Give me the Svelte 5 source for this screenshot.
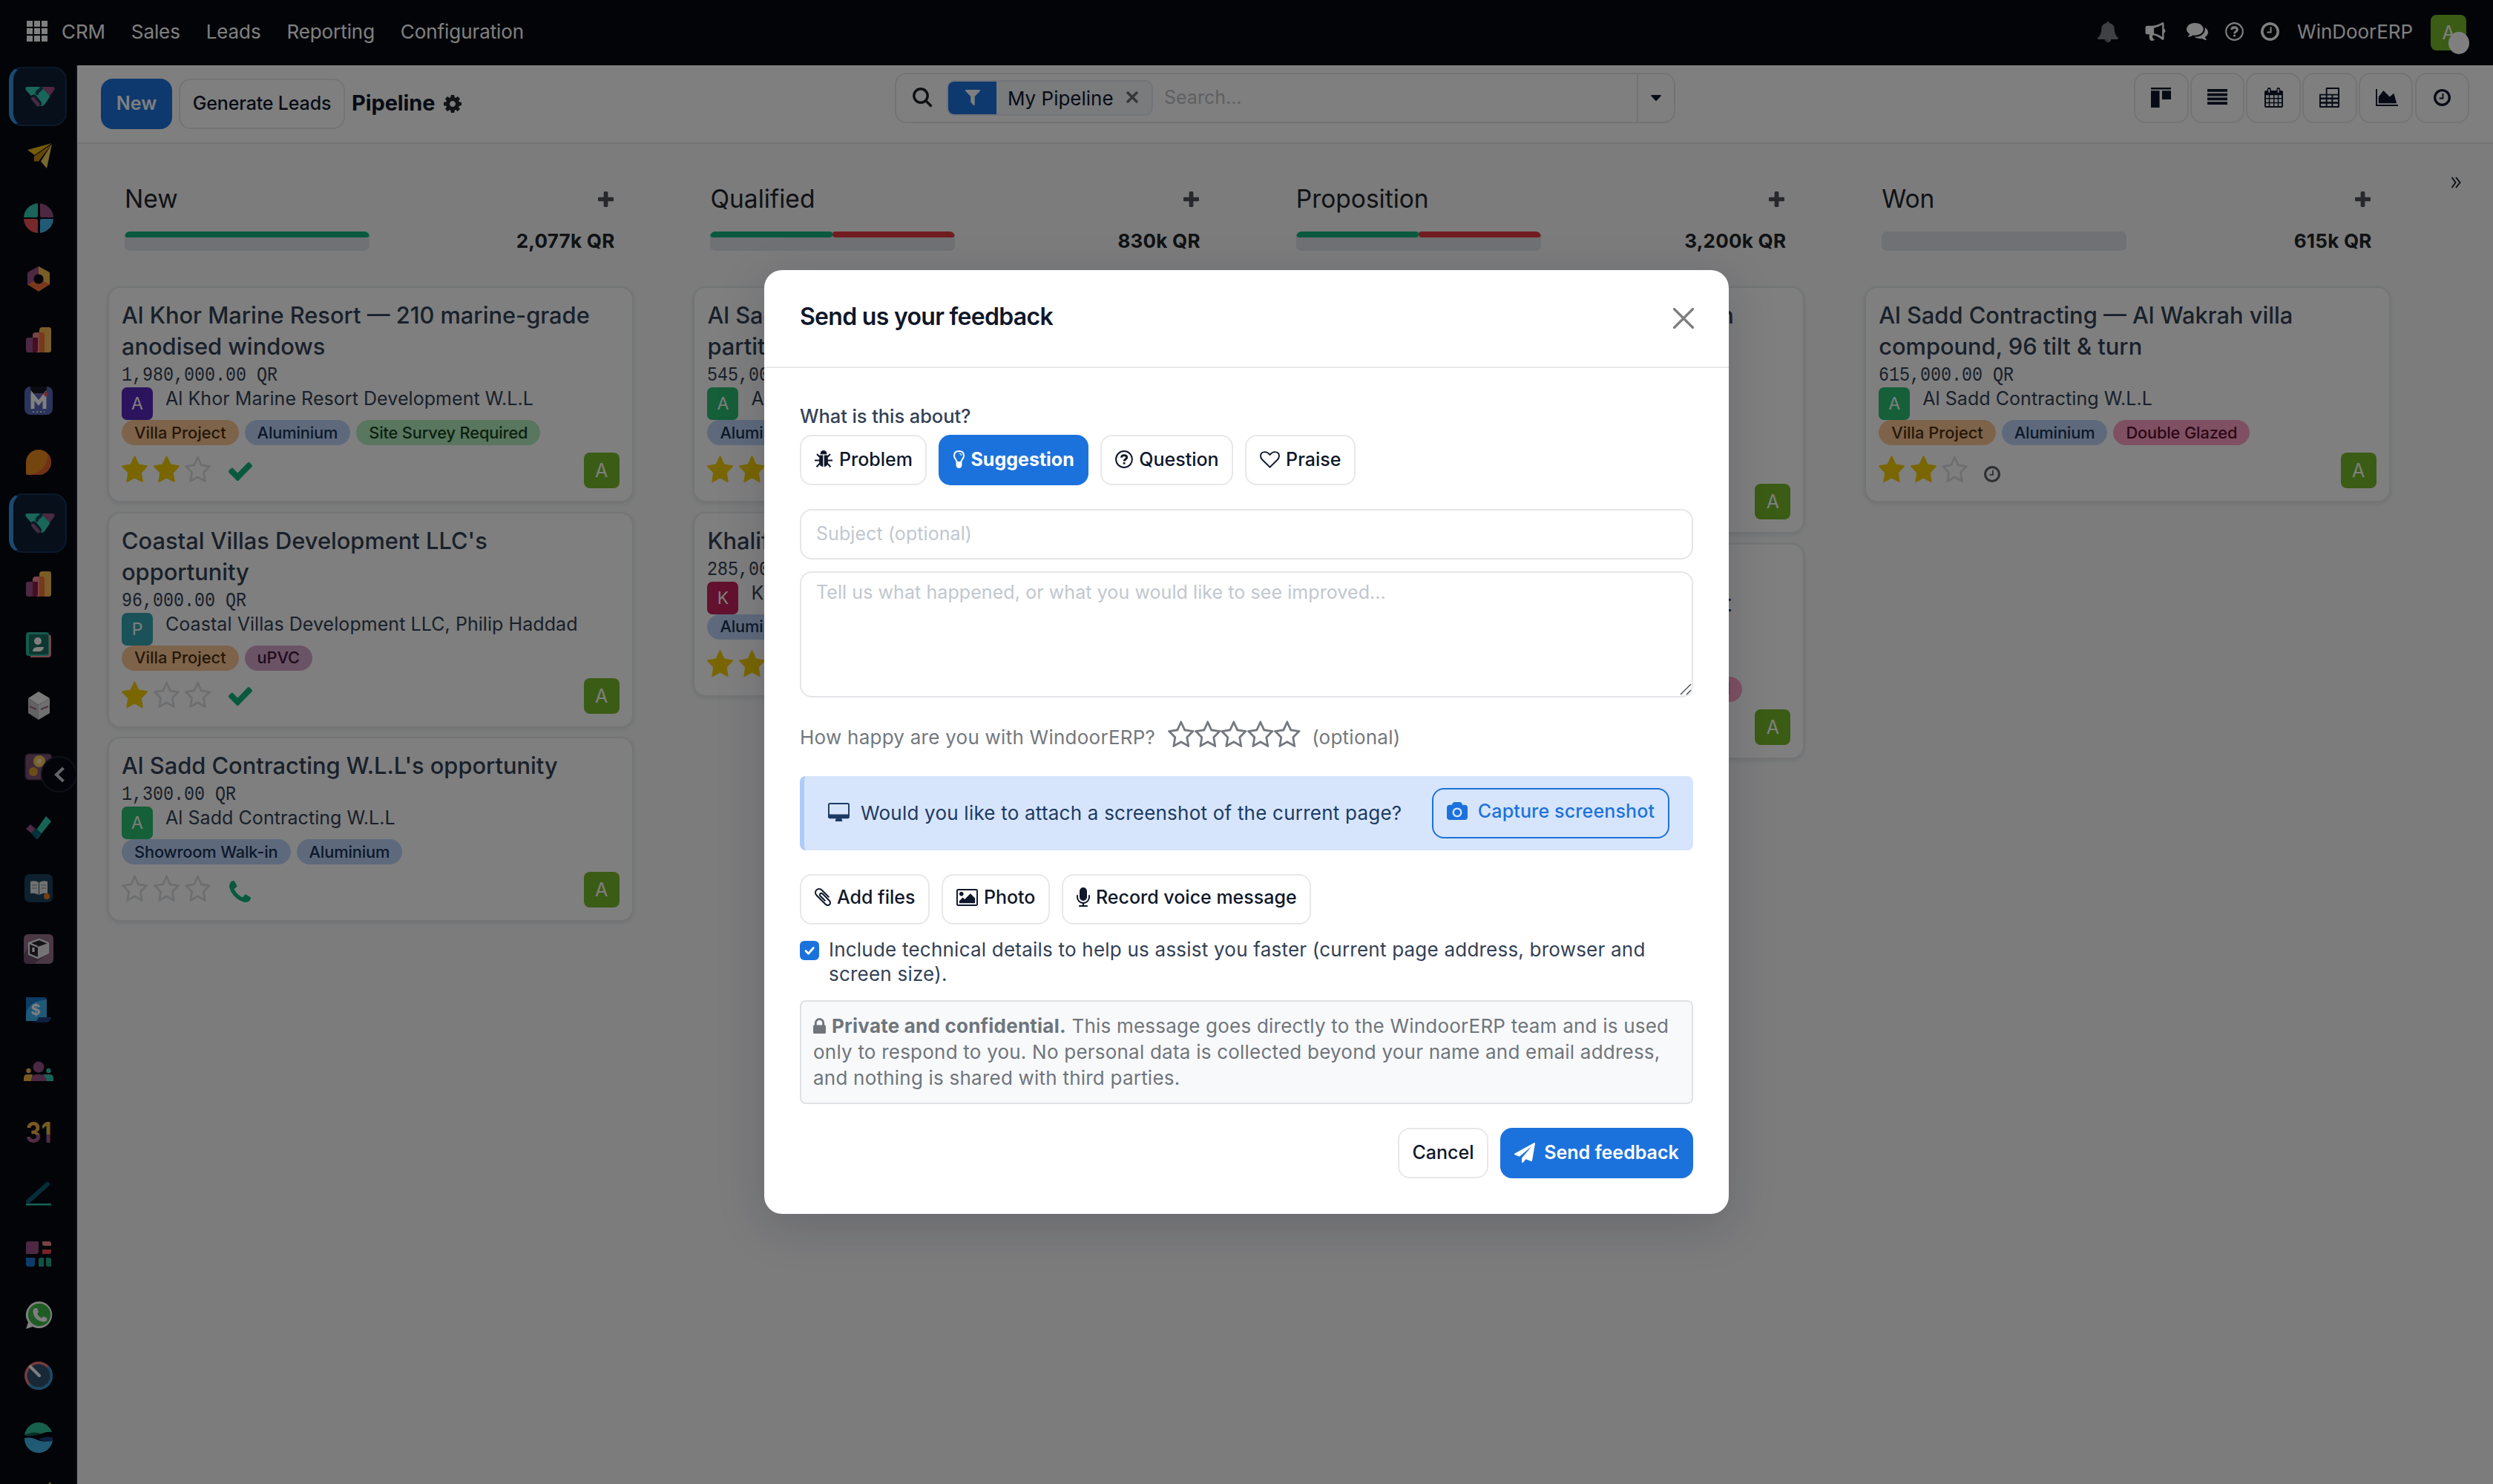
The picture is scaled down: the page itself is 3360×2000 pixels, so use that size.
<script>
  // Single-path glyphs: v = viewBox cropped to the ink, d = outline.
  const glyphs = {
    star: { v: '64 105 1664 1514', d: 'M1728 647q0 22-26 48l-363 354 86 500q1 7 1 20 0 21-10.500 35.500t-30.500 14.500q-19 0-40-12l-449-236-449 236q-22 12-40 12-21 0-31.500-14.500t-10.500-35.500q0-6 2-20l86-500-364-354q-25-27-25-48 0-37 56-46l502-73 225-455q19-41 49-41t49 41l225 455 502 73q56 9 56 46z' },
    staro: { v: '64 105 1664 1514', d: 'M1201 1004l306-297-422-62-189-382-189 382-422 62 306 297-73 421 378-199 377 199zm527-357q0 22-26 48l-363 354 86 500q1 7 1 20 0 50-41 50-19 0-40-12l-449-236-449 236q-22 12-40 12-21 0-31.500-14.500t-10.500-35.500q0-6 2-20l86-500-364-354q-25-27-25-48 0-37 56-46l502-73 225-455q19-41 49-41t49 41l225 455 502 73q56 9 56 46z' },
    check: { v: '121 334 1550 1188', d: 'M1671 566q0 40-28 68l-724 724-136 136q-28 28-68 28t-68-28l-136-136-362-362q-28-28-28-68t28-68l136-136q28-28 68-28t68 28l294 295 656-657q28-28 68-28t68 28l136 136q28 28 28 68z' },
    plus: { v: '192 128 1408 1408', d: 'M1600 736v192q0 40-28 68t-68 28h-416v416q0 40-28 68t-68 28h-192q-40 0-68-28t-28-68v-416h-416q-40 0-68-28t-28-68v-192q0-40 28-68t68-28h416v-416q0-40 28-68t68-28h192q40 0 68 28t28 68v416h416q40 0 68 28t28 68z' },
    camera: { v: '-64 0 1920 1664', d: 'M896 672q119 0 203.500 84.500t84.500 203.500-84.500 203.500-203.500 84.500-203.500-84.500-84.500-203.500 84.500-203.500 203.500-84.500zm704-416q106 0 181 75t75 181v896q0 106-75 181t-181 75h-1408q-106 0-181-75t-75-181v-896q0-106 75-181t181-75h224l51-136q19-49 69.500-84.500t103.500-35.500h512q53 0 103.500 35.500t69.500 84.500l51 136h224zm-704 1152q185 0 316.500-131.500t131.500-316.500-131.500-316.500-316.500-131.500-316.500 131.500-131.500 316.500 131.500 316.500 316.500 131.500z' },
    plane: { v: '0 0 1792 1792', d: 'M1764 11q33 24 27 64l-256 1536q-5 29-32 45-14 8-31 8-11 0-24-5l-453-185-242 295q-18 23-49 23-13 0-22-4-19-7-30.500-23.500t-11.500-36.500v-349l864-1059-1069 925-395-162q-37-14-40-55-2-40 32-59l1664-960q15-9 32-9 20 0 36 11z' },
    clock: { v: '128 128 1536 1536', d: 'M1024 544v448q0 14-9 23t-23 9h-320q-14 0-23-9t-9-23v-64q0-14 9-23t23-9h224v-352q0-14 9-23t23-9h64q14 0 23 9t9 23zm416 352q0-148-73-273t-198-198-273-73-273 73-198 198-73 273 73 273 198 198 273 73 273-73 198-198 73-273zm224 0q0 209-103 385.500t-279.500 279.500-385.500 103-385.500-103-279.500-279.500-103-385.500 103-385.500 279.500-279.500 385.500-103 385.500 103 279.500 279.500 103 385.500z' },
    phone: { v: '192 128 1408 1408', d: 'M1600 1240q0 27-10 70.500t-21 68.500q-21 50-122 106-94 51-186 51-27 0-53-3.500t-57.500-12.500-47-14.500-55.500-20.500-49-18q-98-35-175-83-127-79-264-216t-216-264q-48-77-83-175-3-9-18-49t-20.500-55.500-14.500-47-12.500-57.500-3.500-53q0-92 51-186 56-101 106-122 25-11 68.500-21t70.500-10q14 0 21 3 18 6 53 76 11 19 30 54t35 63.500 31 53.500q3 4 17.500 25t21.500 35.500 7 28.500q0 20-28.500 50t-62 55-62 53-28.500 46q0 9 5 22.500t8.500 20.500 14 24 11.500 19q76 137 174 235t235 174q2 1 19 11.500t24 14 20.500 8.500 22.500 5q18 0 46-28.500t53-62 55-62 50-28.500q14 0 28.500 7t35.500 21.500 25 17.500q25 15 53.500 31t63.500 35 54 30q70 35 76 53 3 7 3 21z' },
    lock: { v: '320 128 1152 1408', d: 'M640 768h512v-192q0-106-75-181t-181-75-181 75-75 181v192zm832 96v576q0 40-28 68t-68 28h-960q-40 0-68-28t-28-68v-576q0-40 28-68t68-28h32v-192q0-184 132-316t316-132 316 132 132 316v192h32q40 0 68 28t28 68z' },
    bell: { v: '64 0 1664 1792', d: 'M912 1696q0-16-16-16-59 0-101.500-42.500t-42.500-101.500q0-16-16-16t-16 16q0 73 51.500 124.500t124.500 51.500q16 0 16-16zm816-288q0 52-38 90t-90 38h-448q0 106-75 181t-181 75-181-75-75-181h-448q-52 0-90-38t-38-90q50-42 91-88t85-119.500 74.500-158.500 50-206 19.500-260q0-152 117-282.500t307-158.500q-8-19-8-39 0-40 28-68t68-28 68 28 28 68q0 20-8 39 190 28 307 158.500t117 282.500q0 139 19.500 260t50 206 74.500 158.500 85 119.500 91 88z' },
    filter: { v: '190 256 1411 1408', d: 'M1595 295q17 41-14 70l-493 493v742q0 42-39 59-13 5-25 5-27 0-45-19l-256-256q-19-19-19-45v-486l-493-493q-31-29-14-70 17-39 59-39h1280q42 0 59 39z' },
    cog: { v: '128 128 1536 1536', d: 'M1152 896q0-106-75-181t-181-75-181 75-75 181 75 181 181 75 181-75 75-181zm512-109v222q0 12-8 23t-20 13l-185 28q-19 54-39 91 35 50 107 138 10 12 10 25t-9 23q-27 37-99 108t-94 71q-12 0-26-9l-138-108q-44 23-91 38-16 136-29 186-7 28-36 28h-222q-14 0-24.500-8.500t-11.500-21.500l-28-184q-49-16-90-37l-141 107q-10 9-25 9-14 0-25-11-126-114-165-168-7-10-7-23 0-12 8-23 15-21 51-66.500t54-70.500q-27-50-41-99l-183-27q-13-2-21-12.500t-8-23.500v-222q0-12 8-23t19-13l186-28q14-46 39-92-40-57-107-138-10-12-10-24 0-10 9-23 26-36 98.500-107.500t94.500-71.500q13 0 26 10l138 107q44-23 91-38 16-136 29-186 7-28 36-28h222q14 0 24.500 8.500t11.500 21.500l28 184q49 16 90 37l142-107q9-9 24-9 13 0 25 10 129 119 165 170 7 8 7 22 0 12-8 23-15 21-51 66.500t-54 70.500q26 50 41 98l183 28q13 2 21 12.500t8 23.500z' },
    area: { v: '0 128 2048 1536', d: 'M2048 1536v128h-2048v-1536h128v1408h1920zm-384-1024l256 896h-1664v-576l448-576 576 576z' },
    comments: { v: '0 256 1792 1408', d: 'M1408 768q0 139-94 257t-256.500 186.500-353.500 68.500q-86 0-176-16-124 88-278 128-36 9-86 16h-3q-11 0-20.500-8t-11.500-21q-1-3-1-6.500t.5-6.500 2-6l2.500-5 3.500-5.500 4-5 4.500-5 4-4.500q5-6 23-25t26-29.500 22.500-29 25-38.500 20.500-44q-124-72-195-177t-71-224q0-139 94-257t256.500-186.500 353.500-68.500 353.500 68.500 256.500 186.500 94 257zm384 256q0 120-71 224.500t-195 176.500q10 24 20.500 44t25 38.500 22.500 29 26 29.500 23 25q1 1 4 4.500t4.500 5 4 5 3.500 5.500l2.500 5 2 6 .5 6.500-1 6.500q-3 14-13 22t-22 7q-50-7-86-16-154-40-278-128-90 16-176 16-271 0-472-132 58 4 88 4 161 0 309-45t264-129q125-92 192-212t67-254q0-77-23-152 129 71 204 178t75 230z' },
    image: { v: '-64 128 1920 1536', d: 'M576 576q0 80-56 136t-136 56-136-56-56-136 56-136 136-56 136 56 56 136zm1024 384v448h-1408v-192l320-320 160 160 512-512zm96-704h-1600q-13 0-22.500 9.500t-9.500 22.500v1216q0 13 9.500 22.500t22.500 9.500h1600q13 0 22.500-9.500t9.500-22.500v-1216q0-13-9.500-22.500t-22.500-9.500zm160 32v1216q0 66-47 113t-113 47h-1600q-66 0-113-47t-47-113v-1216q0-66 47-113t113-47h1600q66 0 113 47t47 113z' },
    clip: { v: '196 133 1400 1527', d: 'M1596 1385q0 117-79 196t-196 79q-135 0-235-100l-777-776q-113-115-113-271 0-159 110-270t269-111q158 0 273 113l605 606q10 10 10 22 0 16-30.500 46.500t-46.500 30.500q-13 0-23-10l-606-607q-79-77-181-77-106 0-179 75t-73 181q0 105 76 181l776 777q63 63 145 63 64 0 106-42t42-106q0-82-63-145l-581-581q-26-24-60-24-29 0-48 19t-19 48q0 32 25 59l410 410q10 10 10 22 0 16-31 47t-47 31q-12 0-22-10l-410-410q-63-61-63-149 0-82 57-139t139-57q88 0 149 63l581 581q100 98 100 235z' },
    desktop: { v: '-64 0 1920 1664', d: 'M1728 992v-832q0-13-9.500-22.500t-22.500-9.500h-1600q-13 0-22.500 9.500t-9.500 22.500v832q0 13 9.500 22.500t22.500 9.500h1600q13 0 22.500-9.500t9.500-22.500zm128-832v1088q0 66-47 113t-113 47h-544q0 37 16 77.500t32 71 16 43.500q0 26-19 45t-45 19h-512q-26 0-45-19t-19-45q0-14 16-44t32-70 16-78h-544q-66 0-113-47t-47-113v-1088q0-66 47-113t113-47h1600q66 0 113 47t47 113z' },
    mic: { v: '320 0 1152 1664', d: 'M1472 704v128q0 221-147.500 384.500t-364.500 187.500v132h256q26 0 45 19t19 45-19 45-45 19h-640q-26 0-45-19t-19-45 19-45 45-19h256v-132q-217-24-364.500-187.500t-147.500-384.500v-128q0-26 19-45t45-19 45 19 19 45v128q0 185 131.500 316.500t316.500 131.500 316.500-131.500 131.500-316.500v-128q0-26 19-45t45-19 45 19 19 45zm-256-384v512q0 132-94 226t-226 94-226-94-94-226v-512q0-132 94-226t226-94 226 94 94 226z' },
    list: { v: '0 0 28 22', d: 'M0 0h28v4H0zM0 6h28v4H0zM0 12h28v4H0zM0 18h28v4H0z' },
    kanban: { v: '0 0 28 28', d: 'M0 0h28v2.500H0zM0 4.500h12V28H0zM15.500 4.500H28V16.500H15.500z' },
    caret: { v: '0 0 16 9', d: 'M1 0h14q1.200.6.4 1.600L8.800 8.600q-.8.700-1.600 0L.6 1.600Q-.2.600 1 0z' },
  };

  const nav = ['CRM', 'Sales', 'Leads', 'Reporting', 'Configuration'];
  const apps = ['crm', 'plane', 'pie', 'hex', 'bars', 'mail', 'leaf', 'crm', 'bars', 'contact', 'cube', 'money', 'tick', 'book', 'box', 'invoice', 'people', 'cal', 'pen', 'tiles', 'wa', 'gauge', 'globe', 'spark'];

  const villa = { t: 'Villa Project', c: 'orange' };
  const alu = { t: 'Aluminium', c: 'blue' };
  const glazed = { t: 'Double Glazed', c: 'pink' };
  const survey = { t: 'Site Survey Required', c: 'green' };
  const columns = [
    { name: 'New', total: '2,077k QR', segs: [['ok', 100]], cards: [
      { title: ['Al Khor Marine Resort — 210 marine-grade', 'anodised windows'], amt: '1,980,000.00 QR', who: 'Al Khor Marine Resort Development W.L.L', ini: 'A', tone: 'violet', tags: [villa, alu, survey], stars: 2, act: 'check' },
      { title: ["Coastal Villas Development LLC's", 'opportunity'], amt: '96,000.00 QR', who: 'Coastal Villas Development LLC, Philip Haddad', ini: 'P', tone: 'teal', tags: [villa, { t: 'uPVC', c: 'plum' }], stars: 1, act: 'check' },
      { title: ["Al Sadd Contracting W.L.L's opportunity"], amt: '1,300.00 QR', who: 'Al Sadd Contracting W.L.L', ini: 'A', tone: 'emerald', tags: [{ t: 'Showroom Walk-in', c: 'blue' }, alu], stars: 0, act: 'phone' },
    ] },
    { name: 'Qualified', total: '830k QR', segs: [['ok', 50], ['bad', 50]], cards: [
      { title: ['Al Sadd Contracting — office', 'partitions'], amt: '545,000.00 QR', who: 'Al Sadd Contracting W.L.L', ini: 'A', tone: 'emerald', tags: [alu], stars: 2, act: 'check' },
      { title: ['Khalifa Villas — sliding doors'], amt: '285,000.00 QR', who: 'Khalifa Villas', ini: 'K', tone: 'rose', tags: [alu], stars: 2, act: 'check' },
    ] },
    { name: 'Proposition', total: '3,200k QR', segs: [['ok', 50], ['bad', 50]], cards: [
      { title: ['Coastal Villas Development — curtain', 'wall and', 'windows'], spread: [594, 0, 0], amt: '2,400,000.00 QR', who: 'Coastal Villas', ini: 'C', tone: 'teal', tags: [alu], stars: 2, act: 'check' },
      { title: ['Al Khor Marine Resort — windows', 'and sliding doors, second phase unit'], spread: [0, 591], amt: '800,000.00 QR', who: 'Al Khor Marine', ini: 'A', tone: 'violet', tags: [villa, survey, glazed], stars: 2, act: 'check' },
    ] },
    { name: 'Won', total: '615k QR', segs: [], cards: [
      { title: ['Al Sadd Contracting — Al Wakrah villa', 'compound, 96 tilt & turn'], amt: '615,000.00 QR', who: 'Al Sadd Contracting W.L.L', ini: 'A', tone: 'emerald', tags: [villa, alu, glazed], stars: 2, act: 'clock' },
    ] },
  ];
</script>

{#snippet g(name, cls)}
  <svg class="g {cls}" viewBox={glyphs[name].v} preserveAspectRatio="none"><path d={glyphs[name].d} /></svg>
{/snippet}

{#snippet question(cls)}
  <svg class="g {cls}" viewBox="0 0 24 24"><circle cx="12" cy="12" r="10.900" class="ln2" /><path class="ln3" d="M8.300 9.600C8.600 7.600 10 6.600 12 6.600c2.100 0 3.700 1.200 3.700 3 0 2.400-3.600 2.500-3.600 5" /><path d="M10.700 16h2.800v2.600h-2.800z" /></svg>
{/snippet}

{#snippet app(name)}
  <svg class="appicon" viewBox="0 0 40 40">
    {#if name === 'crm'}
      <path fill="#985184" d="M20 7h17.500q3.500 1 1.500 4.500l-5.500 7.500L21 8z" />
      <path fill="#36cdb5" d="M2.500 7H21l10 10q3 1.500 1.500 4.500L26 31q-3 3-6 1.500L1 11.500Q-1 7.500 2.500 7z" />
      <path fill="none" stroke="#0b3a4c" stroke-width="9" stroke-linecap="round" d="M11.500 22l6 7.500" />
      <path fill="none" stroke="#985184" stroke-width="4.600" stroke-linecap="round" d="M10.500 23l7 8" />
      <path fill="none" stroke="#0b4a5c" stroke-width="4.600" stroke-linecap="round" d="M21.500 9q-1.500 2.500-3.500 3.500-2.200 1.200-2 3.500" />
      <path fill="none" stroke="#36cdb5" stroke-width="4" stroke-linecap="round" d="M20 17.500q3-1.500 5-1" />
    {:else if name === 'plane'}
      <path fill="#eab912" d="M5 10L37.500 1 14.500 17z" /><path fill="#c98a12" d="M14 18.500L38 2 20 25.500h-6z" /><path fill="#f0d060" d="M38 2l-7 33-8-9.500z" />
    {:else if name === 'pie'}
      <path fill="#34c9b2" d="M19 0v17q0 2-2 2H0A20 20 0 0119 0z" /><path fill="#985184" d="M22 0v17q0 2 2 2h16A20 20 0 0022 0z" /><path fill="#ee5056" d="M19 40V23q0-2-2-2H0a20 20 0 0019 19z" /><path fill="#44b6ea" d="M22 40V23q0-2 2-2h16a20 20 0 01-18 19z" />
    {:else if name === 'hex'}
      <path fill="#985184" d="M20 3L6 10.500q-1 .8-1 2V28l15-8z" /><path fill="#f2b84e" d="M20 3l14 7.500q1 .8 1 2V28l-15-8z" /><path fill="#ee7038" d="M5 27.500l15 9.500 15-9.500-15-8z" /><circle cx="20" cy="20" r="6.600" fill="#070912" />
    {:else if name === 'bars'}
      <path fill="#f0888c" d="M12 14q0-4 4-4h6v27H12z" /><path fill="#f2b84e" d="M21 7q0-4 4-4h9q3 0 3 3v28q0 3-3 3H21z" /><path fill="#ee7038" d="M21 10h4q3 0 3 3v24h-7z" /><path fill="#985184" d="M3 20q0-3 3-3h7v20H6q-3 0-3-3z" /><path fill="#8a1f42" d="M12 17h7v17q0 3-3 3h-4z" />
    {:else if name === 'mail'}
      <rect x="1" y="1" width="38" height="38" rx="8" fill="#5468b8" /><path fill="#141824" d="M9 1h22v9H9z" /><path d="M12 31V13l8 10 8-10v18" fill="none" stroke="#fff" stroke-width="5" /><path fill="#e85060" d="M16 11h12V7l6 4-6 4v-3z" /><path d="M12 35h16" stroke="#ddd" stroke-width="2" stroke-dasharray="2 3" />
    {:else if name === 'leaf'}
      <path fill="#ea8a1e" d="M3 20A17 17 0 1120 37H5q-2 0-2-2z" /><path fill="#e0602c" d="M33 9A17 17 0 0120 37H8Q30 34 33 9z" />
    {:else if name === 'contact'}
      <path fill="#f0888c" d="M9 6h24q4 0 4 4v23q0 4-4 4H9z" /><rect x="3" y="3" width="31" height="32" rx="4" fill="#2cb79c" /><rect x="7" y="6" width="26" height="27" rx="2" fill="#1d6e62" /><circle cx="19" cy="15" r="5" fill="#fff" /><path fill="#fff" d="M12 29q0-6 7-6h8q-1 6-7 6z" />
    {:else if name === 'cube'}
      <path fill="#f4f4f4" d="M20 1l15 9-15 9L6 10z" /><path fill="#c4c4c4" d="M6 10l14 9v20L6 30z" /><path fill="#dedede" d="M35 10l-15 9v20l15-9z" /><path d="M8 21l9 4M23 25l10-4" stroke="#a06080" stroke-width="2" />
    {:else if name === 'money'}
      <rect x="2" y="3" width="36" height="35" rx="5" fill="#7d5377" stroke="#3a3040" stroke-width="1.500" /><circle cx="21" cy="13" r="8" fill="#eec25e" /><circle cx="13" cy="27" r="6" fill="#d99a32" /><circle cx="21" cy="13" r="3" fill="#fbe7a8" />
    {:else if name === 'tick'}
      <path fill="#985184" d="M3 22l6-6 9 8-4 7z" /><path fill="#2fc9ae" d="M13 29L30 5l7 7-19 24z" /><path fill="#0b5f78" d="M10 28l6-7 8 7-7 8z" />
    {:else if name === 'book'}
      <rect x="1" y="1" width="38" height="38" rx="7" fill="#1a435c" /><path fill="#e4e4e4" d="M9 11q6-2 11 1v17q-5-3-11-2zM32 11q-6-2-11 1v17q5-3 11-2z" /><path d="M11 16h7M11 20h7M23 16h7M23 20h7" stroke="#8a8a8a" /><circle cx="31" cy="31" r="4" fill="#ee7d22" />
    {:else if name === 'box'}
      <rect width="40" height="40" rx="6" fill="#94708a" /><path fill="#6d5068" d="M8 14L0 28v6q0 6 6 6h8l18-14z" /><path fill="#2c2430" stroke="#f0f0f0" stroke-width="2.200" d="M7 12l14-5 12 5v13l-14 7-12-5z" /><path fill="#e8e8e8" d="M19 17l14-5v13l-14 7z" /><path d="M7 12l12 5" stroke="#f0f0f0" stroke-width="2.200" /><path d="M13 18v6" stroke="#fff" stroke-width="3" />
    {:else if name === 'invoice'}
      <path fill="#1b78c8" d="M3 3h24q4 0 4 4v26H3z" /><path fill="#3fb2f0" d="M31 6Q8 8 3 24v11h26q2 0 2-2z" /><path fill="#1d3f80" d="M20 30h17q-1 7-7 7H10q8 0 10-7z" /><text x="16" y="27" text-anchor="middle" font-size="20" font-weight="700" fill="#fff">$</text>
    {:else if name === 'people'}
      <circle cx="20" cy="14" r="7.500" fill="#985184" /><circle cx="6.500" cy="19" r="3.200" fill="#f2b540" /><circle cx="33.500" cy="19" r="3.200" fill="#2fc9ae" /><path fill="#f2b540" d="M0 33v-4q0-5 5-5h7l-2 9z" /><path fill="#2fc9ae" d="M40 33v-4q0-5-5-5h-9l4 9z" /><path fill="#985184" d="M10 33q0-9 7-9h5q8 0 9 9z" />
    {:else if name === 'cal'}
      <text x="20" y="34" text-anchor="middle" font-size="38" font-weight="700" textLength="35" lengthAdjust="spacingAndGlyphs" fill="url(#calfill)">31</text>
    {:else if name === 'pen'}
      <path d="M6 31L32 8" stroke="#0f5a70" stroke-width="6" stroke-linecap="round" /><path fill="#2fc9ae" d="M3 34h34v2.500H3z" />
    {:else if name === 'tiles'}
      <path fill="#985184" d="M3 6q0-3 3-3h14v14q0 3-3 3H3z" /><path fill="#f0888c" d="M25 3h9q3 0 3 3v3h-9q-3 0-3-3z" /><path fill="#f0484f" d="M25 14h12v3q0 3-3 3h-9z" /><path fill="#1b78d8" d="M3 25h12v9q0 3-3 3H6q-3 0-3-3z" /><path fill="#1fa886" d="M20 28q0-3 3-3h4v12h-7zM30 25h4q3 0 3 3v9h-4q-3 0-3-3z" />
    {:else if name === 'wa'}
      <path fill="#fff" d="M21 2a18 18 0 11-9 34L3 39l3-9A18 18 0 0121 2z" /><circle cx="21" cy="20" r="15.200" fill="#3fb848" /><path fill="#fff" d="M15 11l3 0 2 5-2 2.500q2 4 6 6l2.500-2.500 5 2.500q0 5-5 5Q14 28 12.500 16q0-4 2.500-5z" />
    {:else if name === 'gauge'}
      <circle cx="20" cy="20" r="19" fill="#f0787c" /><path fill="#3494cc" d="M33.500 6.500a19 19 0 11-27 27z" /><circle cx="20" cy="20" r="15.500" fill="#32506c" /><path d="M9 8l12 12" stroke="#fff" stroke-width="4" stroke-linecap="round" />
    {:else if name === 'globe'}
      <path fill="#2fc098" d="M2 14a19 19 0 0136 0q-6-1-14 2-12 4-23 2z" /><path fill="#0f5a50" d="M1 18q12-6 22-2-10 4-22 2z" /><path fill="#40b4e8" d="M1 22q10-2 18 3 10 4 20-1A19 19 0 011 22z" /><path fill="#1d3f80" d="M20 24q8-5 19-3 0 3-1 5-9 2-18-2z" />
    {:else}
      <path fill="#e8c020" d="M34 0l3 0-4 8z" />
    {/if}
  </svg>
{/snippet}

<div class="screen">
  <svg class="defs"><defs><linearGradient id="calfill" x1="0" y1="0" x2="0" y2="1"><stop offset=".56" stop-color="#f2b540" /><stop offset=".56" stop-color="#a5568c" /></linearGradient></defs></svg>

  <header class="topbar">
    <svg class="launcher" viewBox="0 0 28 28"><path d="M0 0h8v8H0zM10 0h8v8h-8zM20 0h8v8h-8zM0 10h8v8H0zM10 10h8v8h-8zM20 10h8v8h-8zM0 20h8v8H0zM10 20h8v8h-8zM20 20h8v8h-8z" /></svg>
    <nav>{#each nav as n}<span>{n}</span>{/each}</nav>
    <div class="tray">
      {@render g('bell', 'bell')}
      <svg class="g horn" viewBox="0 0 28 26"><path fill-rule="evenodd" d="M26 9q2 .5 2 3t-2 3v8q0 2-2 2-7-6-13-7-2 1-1 3.500 1 2 3 3-1 1.500-3.500 1.500-2 0-3-1-2-4-1-8H3q-3 0-3-3V8q0-3 3-3h7q7-.5 14-5 2 0 2 2zm-2.500-5.500Q18 7 12 8v7.500q6 1 11.500 5z" /></svg>
      {@render g('comments', 'chat')}
      {@render question('q')}
      {@render g('clock', 'tclock')}
      <span class="db">WinDoorERP</span>
      <div class="avatar me">A<i></i></div>
    </div>
  </header>

  <div class="main">
    <aside class="side">
      {#each apps as a}<div class="app" class:on={a === 'crm'}>{@render app(a)}</div>{/each}
      <div class="collapse"><svg viewBox="0 0 16 24"><path d="M13.500 3L4 12l9.500 9" /></svg></div>
    </aside>

    <div class="content">
      <div class="panel">
        <div class="left">
          <button class="btn primary new">New</button>
          <button class="btn gen">Generate Leads</button>
          <strong>Pipeline</strong>
          {@render g('cog', 'cog')}
        </div>
        <div class="search">
          <svg class="mag" viewBox="0 0 27 27"><circle cx="11" cy="11" r="9.200" /><path d="M17.500 17.500l8 8" /></svg>
          <div class="facet"><span class="fi">{@render g('filter', 'filter')}</span><span class="ft">My Pipeline</span><svg class="x" viewBox="0 0 18 18"><path d="M2 2l14 14M16 2L2 16" /></svg></div>
          <span class="ph">Search...</span>
          <span class="drop">{@render g('caret', 'caret')}</span>
        </div>
        <div class="views">
          <span>{@render g('kanban', 'v28')}</span>
          <span>{@render g('list', 'vlist')}</span>
          <span><svg class="g cal" viewBox="0 0 26 28"><path fill-rule="evenodd" d="M2 4h2V2q0-2 2.500-2T9 2v2h8V2q0-2 2.500-2T22 2v2h2q2 0 2 2v20q0 2-2 2H2q-2 0-2-2V6q0-2 2-2zM5.500 2v5h2V2zM18.500 2v5h2V2zM2 10.500v4h4v-4zm5.500 0v4h5v-4zm6.500 0v4h4.500v-4zm6 0v4h4v-4zM2 16v4.500h4V16zm5.500 0v4.500h5V16zm6.500 0v4.500h4.500V16zm6 0v4.500h4V16zM2 22v4h4v-4zm5.500 0v4h5v-4zm6.500 0v4h4.500v-4zm6 0v4h4v-4z" /></svg></span>
          <span><svg class="g v28" viewBox="0 0 28 28"><path fill-rule="evenodd" d="M10 0h17q1 0 1 1v26q0 1-1 1H1q-1 0-1-1V10q0-1 1-1h8V1q0-1 1-1zm1 2v7h15V2zM2 11v3h7v-3zm9 0v3h6v-3zm8 0v3h7v-3zM2 16.500v3.500h7v-3.500zm9 0v3.500h6v-3.500zm8 0v3.500h7v-3.500zM2 22.500V26h7v-3.500zm9 0V26h6v-3.500zm8 0V26h7v-3.500z" /></svg></span>
          <span>{@render g('area', 'varea')}</span>
          <span>{@render g('clock', 'vclock')}</span>
        </div>
      </div>

      <div class="board">
        {#each columns as col}
          <section class="col">
            <div class="chead"><h2>{col.name}</h2>{@render g('plus', 'plus')}</div>
            <div class="cprog">
              <div class="bar">{#each col.segs as [k, w]}<i class={k} style="width:{w}%"></i>{/each}</div>
              <b>{col.total}</b>
            </div>
            <div class="cards">
              {#each col.cards as c}
                <article class="card">
                  <h3>{#each c.title as line, i}<span class="line" style={c.spread?.[i] ? `width:${c.spread[i]}px` : null}>{line}</span>{/each}</h3>
                  <div class="amt"><span>{c.amt}</span></div>
                  <div class="who"><span class="ini {c.tone}">{c.ini}</span><span class="name">{c.who}</span></div>
                  <div class="tags">{#each c.tags as t}<span class="tag {t.c}">{t.t}</span>{/each}</div>
                  <div class="foot">
                    <div class="stars">{#each [0, 1, 2] as i}{@render g(i < c.stars ? 'star' : 'staro', i < c.stars ? 'st full' : 'st')}{/each}</div>
                    {@render g(c.act, 'act ' + c.act)}
                    <div class="avatar">A</div>
                  </div>
                </article>
              {/each}
            </div>
          </section>
        {/each}
        <svg class="fold" viewBox="0 0 14 16"><path d="M1.500 1l5 7-5 7M7 1l5.500 7L7 15" /></svg>
      </div>
    </div>
  </div>

  <div class="overlay">
    <div class="modal">
      <div class="mhead">
        <h1>Send us your feedback</h1>
        <svg class="close" viewBox="0 0 28 28"><path d="M1.500 1.500l25 25M26.500 1.500l-25 25" /></svg>
      </div>
      <div class="mbody">
        <label class="about" for="subject">What is this about?</label>
        <div class="row">
          <button class="btn kind">
            <svg class="g bug" viewBox="0 0 24 24"><path d="M7.500 5.200Q7.800 0 12 0t4.500 5.200z" /><path d="M6.500 6.500h4.800V22Q6 21.500 6 15zM12.700 6.500h4.800L18 15q0 6.500-5.300 7z" /><path class="ln2" d="M7 9L3 5M17 9l4-4M6.500 13.500H0M17.500 13.500H24M7 17.500l-4.500 4.700M17 17.500l4.500 4.700" /></svg>
            <span>Problem</span></button>
          <button class="btn primary kind">
            <svg class="g bulb" viewBox="0 0 15 24"><path class="ln2" d="M4.600 16Q4.600 14 3 12 1 9.800 1 7.300 1 1 7.500 1T14 7.300q0 2.500-2 4.700-1.600 2-1.600 4z" /><path d="M3.600 16.500h7.800v4Q10.500 24 7.500 24t-3.900-3.500z" /><path class="ln1" d="M7.500 4q2.800 0 3.200 2.800" /></svg>
            <span>Suggestion</span></button>
          <button class="btn kind">{@render question('mq')}<span>Question</span></button>
          <button class="btn kind">
            <svg class="g heart" viewBox="0 0 28 24"><path class="ln2" d="M14 22.500L3.500 12.300Q1 9.700 1 6.800 1 1.200 7.300 1.200 10.500 1.200 14 5q3.500-3.800 6.700-3.800Q27 1.200 27 6.800q0 2.900-2.500 5.500z" /></svg>
            <span>Praise</span></button>
        </div>
        <input id="subject" placeholder="Subject (optional)" />
        <div class="area"><textarea placeholder="Tell us what happened, or what you would like to see improved..."></textarea>
          <svg viewBox="0 0 16 16"><path d="M1 15L15 1M9 15l6-6" /></svg></div>
        <div class="happy"><span>How happy are you with WindoorERP?</span><div class="five">{#each [1, 2, 3, 4, 5] as i}{@render g('staro', 'big')}{/each}</div><span>(optional)</span></div>
        <div class="alert">{@render g('desktop', 'desk')}<span class="ask">Would you like to attach a screenshot of the current page?</span>
          <button class="btn outline up">{@render g('camera', 'cam')}<span>Capture screenshot</span></button></div>
        <div class="row attach">
          <button class="btn kind up">{@render g('clip', 'clip')}<span>Add files</span></button>
          <button class="btn kind up">{@render g('image', 'img')}<span>Photo</span></button>
          <button class="btn kind up">{@render g('mic', 'mic')}<span>Record voice message</span></button>
        </div>
        <div class="tech"><span class="cb"><svg viewBox="0 0 26 26"><path d="M8 13.500l3.700 3.700 6.600-7.700" /></svg></span><p>Include technical details to help us assist you faster (current page address, browser and<br />screen size).</p></div>
        <div class="private"><p>{@render g('lock', 'lock')}<b>Private and confidential.</b> This message goes directly to the WindoorERP team and is used<br />only to respond to you. No personal data is collected beyond your name and email address,<br />and nothing is shared with third parties.</p></div>
        <div class="mfoot"><button class="btn cancel">Cancel</button><button class="btn primary send">{@render g('plane', 'pplane')}<span>Send feedback</span></button></div>
      </div>
    </div>
  </div>
</div>

<style>
  :global(body) { margin: 0; background: #fff; }
  * { box-sizing: border-box; }
  .screen { position: relative; width: 3360px; height: 2000px; overflow: hidden; display: flex; flex-direction: column; font-family: Inter, 'Liberation Sans', sans-serif; font-size: 26px; color: #334155; white-space: nowrap; }
  .defs { position: absolute; width: 0; height: 0; }
  h1, h2, h3, p { margin: 0; font-weight: 400; }
  .g { fill: currentColor; flex: none; display: block; overflow: visible; }
  .ln1, .ln2, .ln3 { fill: none; stroke: currentColor; }
  .ln1 { stroke-width: 1.200; }
  .ln2 { stroke-width: 2; }
  .ln3 { stroke-width: 2.900; }

  .topbar { height: 88px; flex: none; background: #050811; color: #fff; display: flex; align-items: center; padding: 0 36px; }
  .launcher { width: 28px; height: 28px; fill: #fff; margin-bottom: 4px; }
  nav { display: flex; gap: 34.800px; margin-left: 19px; letter-spacing: -.08px; padding-bottom: 3px; }
  .tray { margin-left: auto; display: flex; align-items: center; padding-bottom: 3px; }
  .bell { width: 28px; height: 28px; color: #7d8086; margin-right: 36px; }
  .horn { width: 28px; height: 25px; margin-right: 28px; }
  .chat { width: 29px; height: 23px; margin-right: 23px; }
  .q { width: 25px; height: 25px; margin-right: 23px; }
  .tclock { width: 25px; height: 25px; margin-right: 24px; }
  .db { margin-right: 24px; letter-spacing: -.05px; }
  .avatar { position: relative; width: 48px; height: 48px; border-radius: 8px; background: #77b82b; color: #fff; display: flex; align-items: center; justify-content: center; font-size: 25px; }
  .me { margin-top: 3px; }
  .me i { position: absolute; right: -4px; bottom: -5px; width: 28px; height: 30px; border-radius: 50%; background: #fff; }

  .main { flex: 1; min-height: 0; display: flex; }
  .side { position: relative; width: 104px; flex: none; background: #050811; border-right: 2px solid #151b26; padding: 2px 12px 0; display: flex; flex-direction: column; gap: 2.100px; overflow: hidden; }
  .app { width: 78px; height: 80px; flex: none; border: 2px solid transparent; border-radius: 18px; display: flex; align-items: center; justify-content: center; }
  .on { background: #0c1f35; border-color: #153558; border-left: 6px solid #3a92e0; }
  .appicon { width: 40px; height: 40px; margin-left: 2px; overflow: visible; }
  .collapse { position: absolute; left: 55px; top: 931px; width: 49px; height: 49px; border-radius: 50%; background: #060912; border: 2px solid #1b2230; display: flex; align-items: center; justify-content: center; }
  .collapse svg { width: 16px; height: 24px; fill: none; stroke: #c8cbd0; stroke-width: 4; }

  .content { flex: 1; min-width: 0; display: flex; flex-direction: column; background: #f8f9fa; }
  .panel { height: 106px; flex: none; background: #fff; border-bottom: 2px solid #e5e7eb; display: flex; align-items: flex-start; padding: 0 32px; color: #0f172a; }
  .btn { height: 68px; border: 2px solid #e8e8ea; border-radius: 16px; background: #fff; color: #0f172a; font: 500 25px Inter, 'Liberation Sans', sans-serif; letter-spacing: 0; display: flex; align-items: center; justify-content: center; padding: 0 0 2px; margin: 0; flex: none; white-space: nowrap; }
  .primary { background: #1c72dc; border-color: #1c72dc; color: #fff; font-weight: 700; }
  .up { padding-bottom: 6px; }
  .left { width: 1070px; flex: none; padding-top: 18px; display: flex; align-items: center; }
  .new { width: 96px; margin-right: 9px; font-weight: 600; }
  .gen { width: 224px; letter-spacing: -.15px; }
  .left strong { font-size: 29px; font-weight: 700; letter-spacing: -.1px; margin: 0 12px 4px 9px; }
  .cog { width: 24px; height: 24px; color: #22262c; margin-bottom: 1px; }
  .search { width: 1052px; height: 68px; margin-top: 10px; flex: none; border: 2px solid #e5e7eb; border-radius: 16px; display: flex; align-items: center; padding-left: 22px; }
  .mag { width: 27px; height: 27px; fill: none; stroke: #1c2026; stroke-width: 3.400; margin-right: 19px; margin-bottom: 2px; }
  .facet { height: 48px; width: 278px; border: 2px solid #e3e8f2; background: #f3f6fb; border-radius: 10px; display: flex; align-items: center; overflow: hidden; }
  .fi { width: 65px; height: 44px; background: #1c72dc; color: #fff; display: flex; align-items: center; justify-content: center; margin-right: 15px; }
  .filter { width: 20px; height: 21px; margin-bottom: 2px; }
  .x { width: 18px; height: 18px; margin-left: 16px; margin-bottom: 2px; fill: none; stroke: #686d74; stroke-width: 3.400; }
  .ph { color: #bcc0c6; font-size: 25px; margin-left: 15px; margin-bottom: 2px; }
  .drop { margin-left: auto; width: 50px; height: 64px; border-left: 2px solid #e5e7eb; display: flex; align-items: center; justify-content: center; }
  .caret { width: 14px; height: 8px; }
  .views { margin: 10px 0 0 auto; display: flex; gap: 2.200px; }
  .views span { width: 73.500px; height: 68px; border: 2px solid #e8e8ea; border-radius: 16px; display: flex; align-items: center; justify-content: center; padding-bottom: 2px; }
  .v28 { width: 27px; height: 27px; }
  .vlist { width: 27px; height: 21px; margin-bottom: 2px; }
  .cal { width: 25px; height: 27px; }
  .varea { width: 30px; height: 23px; margin-left: 2px; }
  .vclock { width: 23px; height: 23px; }

  .board { position: relative; flex: 1; min-height: 0; display: flex; padding-left: 41px; }
  .col { width: 708.500px; margin-right: 80.900px; flex: none; }
  .chead { height: 40px; margin: 54px 27px 0 23px; display: flex; align-items: center; justify-content: space-between; }
  h2 { font-size: 33.500px; color: #212529; }
  .plus { width: 21px; height: 21px; color: #4c5157; }
  .cprog { height: 34px; margin: 20px 25px 0 23px; display: flex; align-items: center; justify-content: space-between; }
  .bar { width: 330px; height: 26px; border-radius: 7px; background: #e1e3e8; display: flex; overflow: hidden; }
  .bar i { height: 8px; border-radius: 4px; }
  .ok { background: #12b37c; }
  .bad { background: #e23b40; }
  .cprog b { color: #212529; letter-spacing: .25px; padding-bottom: 1px; }
  .cards { margin-top: 44px; display: flex; flex-direction: column; gap: 12.500px; }
  .card { background: #fff; border: 2px solid #e6e8eb; border-radius: 17px; box-shadow: 0 2px 6px rgba(15, 23, 42, .1); padding: 16px 17px 17px; }
  h3 { font-size: 30.800px; font-weight: 500; line-height: 42px; display: flex; flex-direction: column; align-items: flex-start; }
  .line { text-align-last: justify; white-space: normal; }
  .amt { height: 34px; padding-top: 1px; display: flex; align-items: center; font: 28px 'Liberation Mono', monospace; }
  .amt span { transform: scaleX(.833); transform-origin: 0 50%; }
  .who { height: 44px; display: flex; align-items: flex-start; gap: 17px; }
  .ini { width: 42px; height: 44px; border-radius: 7px; color: #fff; font-size: 23px; display: flex; align-items: center; justify-content: center; }
  .violet { background: #5728ba; }
  .teal { background: #37a4b3; }
  .emerald { background: #2abf72; }
  .rose { background: #c6235e; }
  .name { font-size: 25px; line-height: 30px; letter-spacing: .06px; }
  .tags { height: 34px; display: flex; gap: 8px; }
  .tag { height: 34px; border-radius: 17px; padding: 0 17px 1px; font-size: 21.800px; font-weight: 500; letter-spacing: -.15px; display: flex; align-items: center; }
  .orange { background: #fbc794; color: #4a2c0c; letter-spacing: 0; }
  .blue { background: #bcd4f8; color: #173055; }
  .green { background: #b2edbd; color: #16401f; }
  .plum { background: #d7a6cc; color: #3b1434; }
  .pink { background: #fda1c5; color: #5a0c2e; }
  .foot { height: 48px; margin-top: 10px; display: flex; align-items: center; }
  .foot .avatar { margin-left: auto; }
  .stars { display: flex; gap: 7.500px; margin-right: 24px; margin-bottom: 2px; }
  .st { width: 35px; height: 34px; color: #dadcdf; }
  .full { color: #f3cc00; }
  .act { color: #12b37c; }
  .act.check { width: 32px; height: 25px; margin-top: 2px; }
  .act.phone { width: 29px; height: 29px; margin-left: 1px; margin-top: 4px; }
  .act.clock { width: 22px; height: 22px; color: #5c6168; margin: 10px 0 0 -2px; }
  .fold { position: absolute; right: 43px; top: 44px; width: 14px; height: 16px; fill: none; stroke: #212529; stroke-width: 2; }

  .overlay { position: absolute; inset: 0; background: rgba(0, 0, 0, .5); display: flex; justify-content: center; align-items: flex-start; padding-top: 364px; }
  .modal { width: 1300px; height: 1272px; background: #fff; border-radius: 24px; box-shadow: 0 16px 64px rgba(15, 23, 42, .18); }
  .mhead { height: 132px; border-bottom: 2px solid #e8e8ea; padding: 0 47px 0 48px; display: flex; align-items: center; justify-content: space-between; }
  h1 { font-size: 32px; font-weight: 600; letter-spacing: -.7px; color: #0f172a; padding-bottom: 6px; }
  .close { width: 28px; height: 28px; fill: none; stroke: #7e7e80; stroke-width: 3.200; stroke-linecap: round; }
  .mbody { padding: 48px 48px 0; display: flex; flex-direction: column; }
  .about { font-size: 25.500px; font-weight: 500; line-height: 34px; letter-spacing: -.08px; }
  .row { display: flex; gap: 16px; margin-top: 8px; }
  .kind { padding-left: 18px; padding-right: 17.500px; }
  .bug { width: 24px; height: 24px; margin-right: 9px; }
  .bulb { width: 15px; height: 24px; margin-right: 8px; }
  .mq { width: 24px; height: 24px; margin-right: 8px; }
  .heart { width: 27px; height: 23px; margin-right: 8px; }
  input, textarea { font: 25px Inter, 'Liberation Sans', sans-serif; letter-spacing: .08px; border: 2px solid #e5e6e8; border-radius: 16px; background: #fff; outline: 0; padding: 0 20px 2px; width: 1204px; display: block; margin: 0; }
  input { height: 68px; margin-top: 32px; }
  input::placeholder, textarea::placeholder { color: #c1c7cf; opacity: 1; }
  .area { position: relative; height: 170px; margin-top: 16px; }
  textarea { height: 170px; padding-top: 9px; line-height: 34px; resize: none; }
  .area svg { position: absolute; right: 2px; bottom: 3px; width: 16px; height: 16px; fill: none; stroke: #54585e; stroke-width: 1.500; }
  .happy { height: 34px; margin-top: 36px; display: flex; align-items: center; color: #73787e; letter-spacing: .25px; }
  .five { display: flex; margin: 0 16px 7px 17px; }
  .big { width: 35.600px; height: 34px; }
  .alert { height: 100px; margin-top: 36px; background: #d7e5fc; border-left: 6px solid #adcbfa; border-radius: 8px; display: flex; align-items: center; padding: 0 32px; color: #1c3a63; letter-spacing: .22px; }
  .desk { width: 29px; height: 25px; margin-right: 15px; margin-bottom: 4px; }
  .ask { padding-bottom: 2px; }
  .outline { margin-left: auto; width: 320px; background: transparent; border-color: #1c72dc; color: #1c72dc; letter-spacing: .15px; }
  .cam { width: 28px; height: 24px; margin-right: 14px; }
  .attach { margin-top: 32px; }
  .clip { width: 22px; height: 24px; margin-right: 8px; }
  .img { width: 29px; height: 23px; margin-right: 8px; }
  .mic { width: 18px; height: 26px; margin-right: 8px; }
  .tech { margin-top: 17px; display: flex; gap: 13px; line-height: 33px; letter-spacing: .22px; }
  .cb { width: 26px; height: 26px; margin-top: 5px; border-radius: 6px; background: #1c72dc; flex: none; }
  .cb svg { display: block; width: 26px; height: 26px; fill: none; stroke: #fff; stroke-width: 2.800; stroke-linecap: round; stroke-linejoin: round; }
  .private { height: 140px; margin-top: 19px; border: 2px solid #dee2e6; border-radius: 8px; background: #f8f9fb; padding: 15px 16px; line-height: 35px; color: #6f757b; letter-spacing: .22px; }
  .private .g { display: inline-block; vertical-align: -1px; }
  .lock { width: 17px; height: 21px; margin-right: 8px; }
  .mfoot { margin-top: 32px; display: flex; justify-content: flex-end; gap: 16px; }
  .cancel { width: 122px; }
  .send { width: 260px; font-weight: 600; letter-spacing: 0; }
  .pplane { width: 28px; height: 27px; margin-right: 12px; }
</style>
